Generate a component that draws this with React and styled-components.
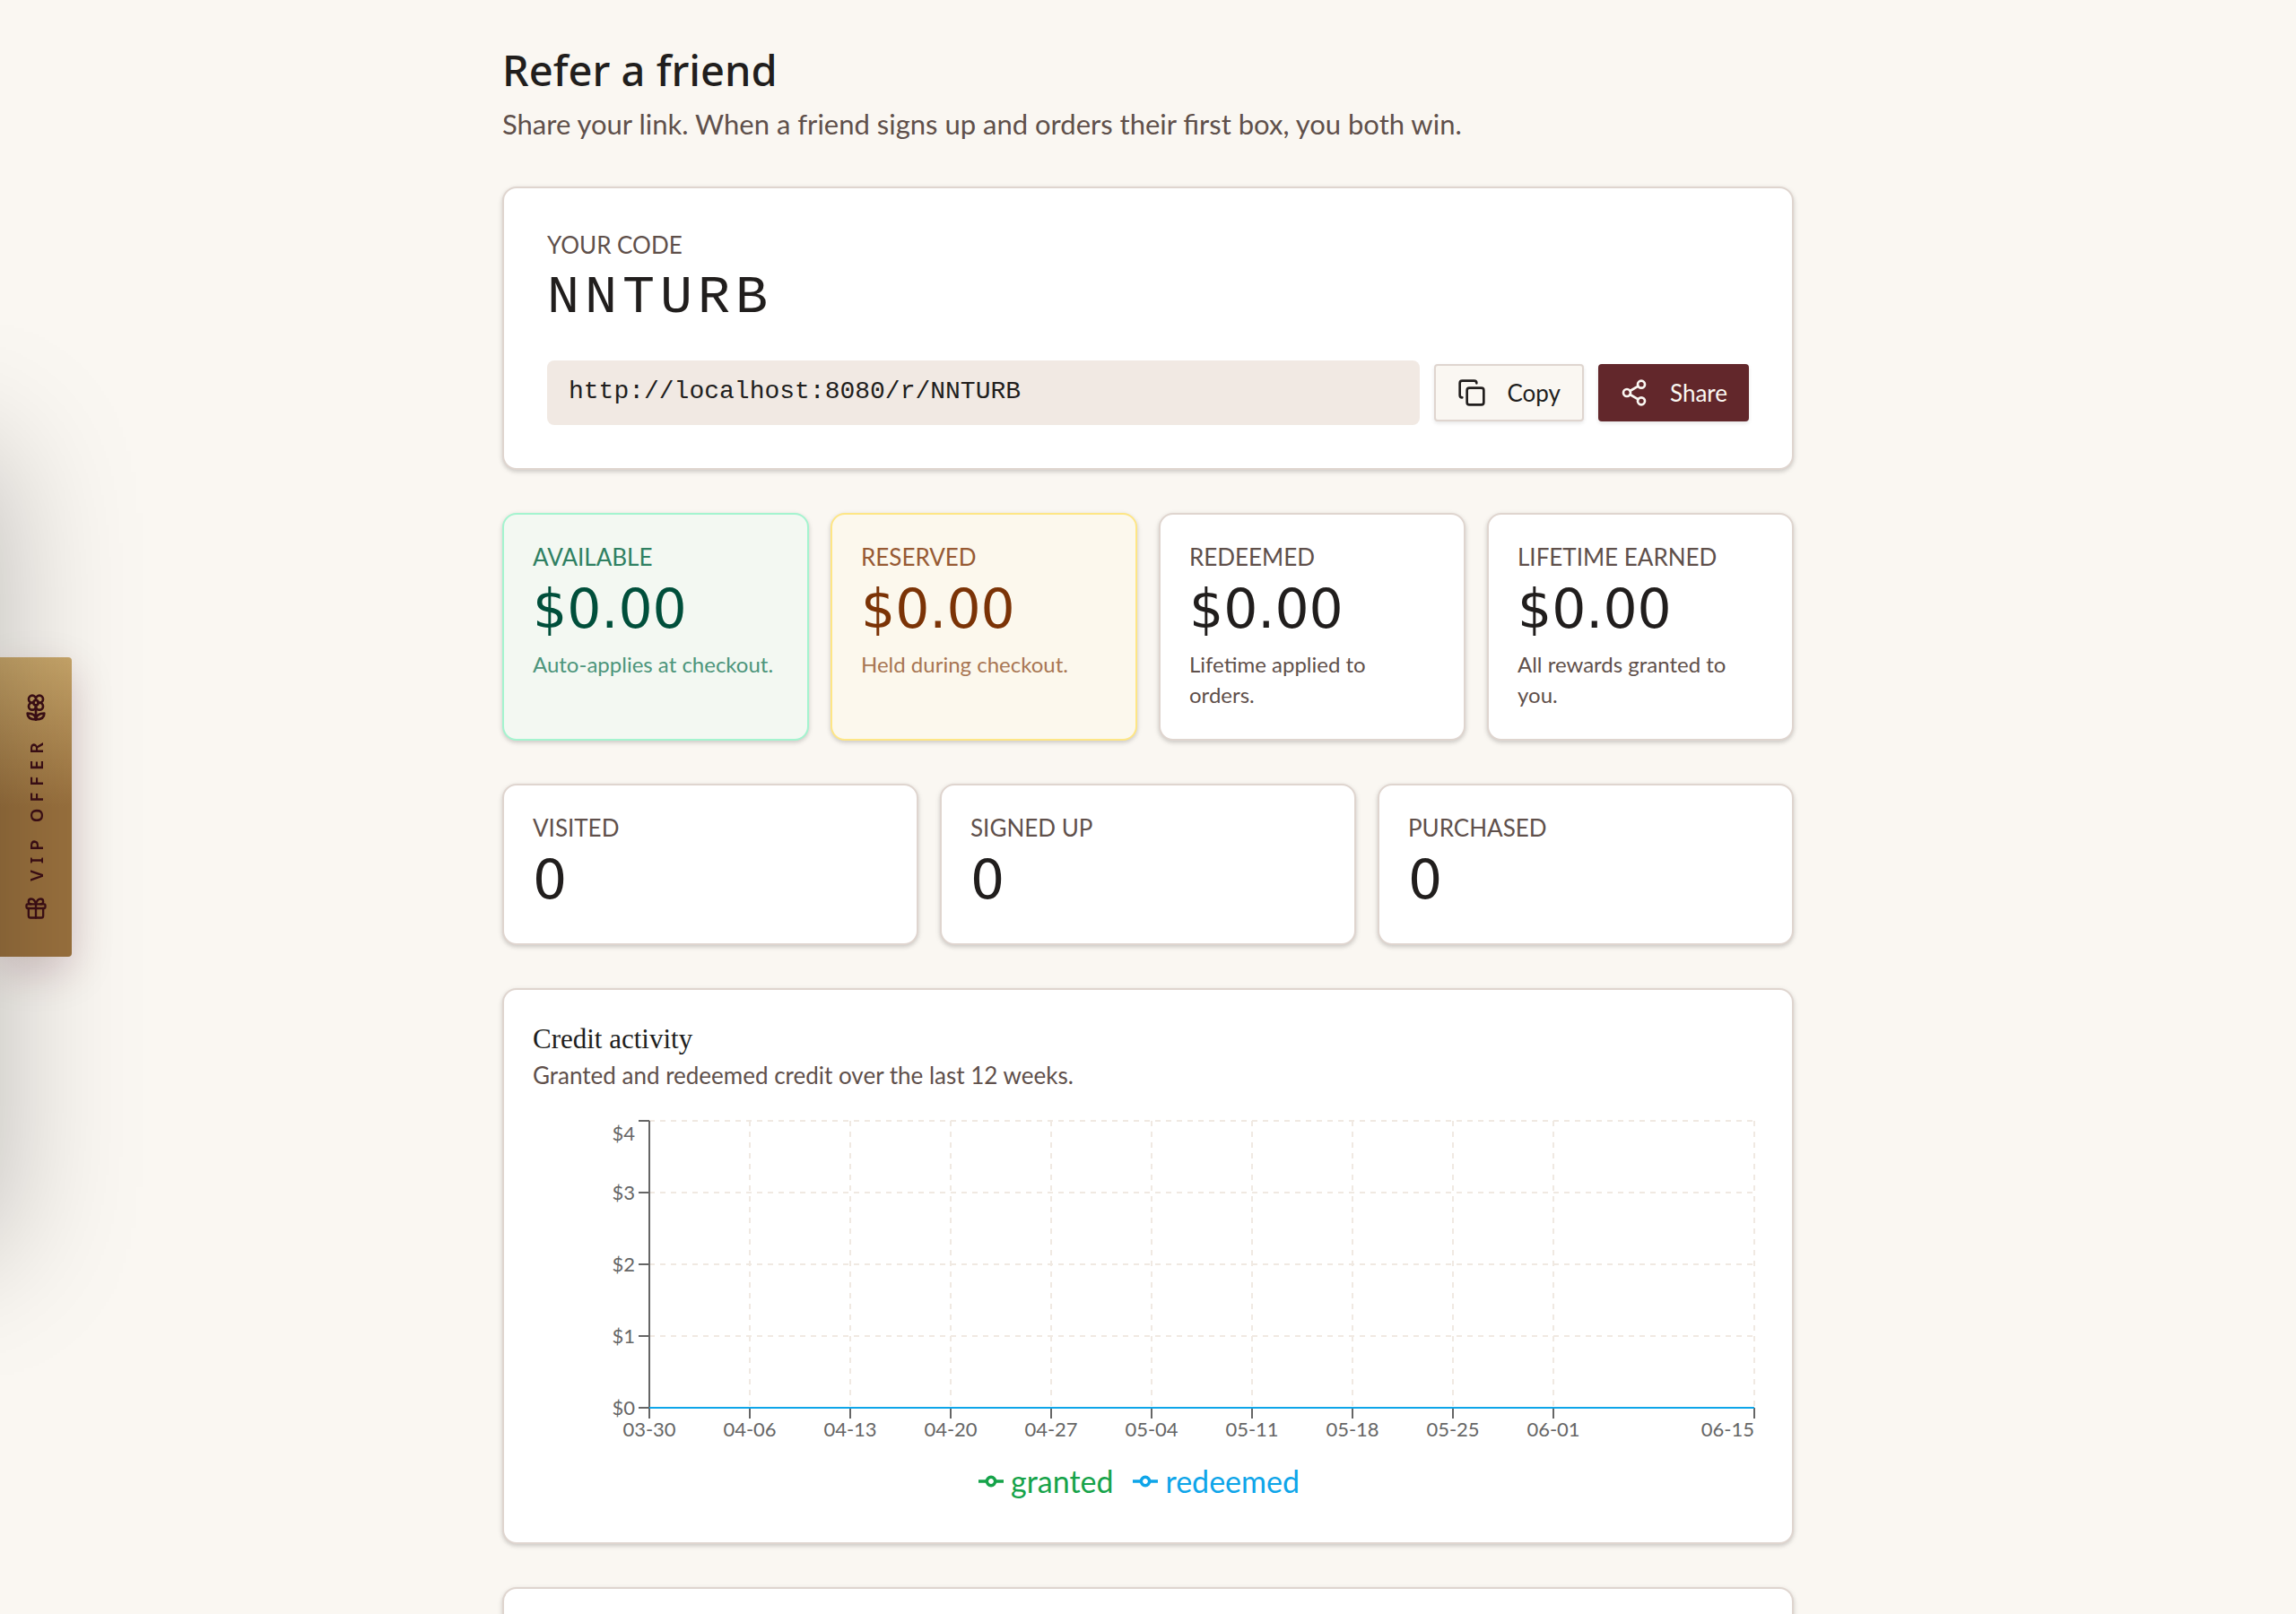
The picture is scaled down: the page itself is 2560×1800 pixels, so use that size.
import React, { useEffect, useRef, useState } from "react";
import styled, { createGlobalStyle } from "styled-components";
import { Copy, Share2, Gift, Flower2 } from "lucide-react";

const stats = [
  { label: "AVAILABLE", value: "$0.00", note: "Auto-applies at checkout.", tone: "green" },
  { label: "RESERVED", value: "$0.00", note: "Held during checkout.", tone: "amber" },
  { label: "REDEEMED", value: "$0.00", note: "Lifetime applied to orders." },
  { label: "LIFETIME EARNED", value: "$0.00", note: "All rewards granted to you." },
];

const funnel = [
  { label: "VISITED", value: "0" },
  { label: "SIGNED UP", value: "0" },
  { label: "PURCHASED", value: "0" },
];

const weeks = [
  "03-30",
  "04-06",
  "04-13",
  "04-20",
  "04-27",
  "05-04",
  "05-11",
  "05-18",
  "05-25",
  "06-01",
  "06-08",
  "06-15",
];
const dollars = [0, 1, 2, 3, 4];

const tones = {
  plain: {
    bg: "#ffffff",
    border: "#dfd5cf",
    label: "#5f504b",
    value: "#211e1d",
    note: "#5f504b",
  },
  green: {
    bg: "#f3f8f2",
    border: "#a4f4cf",
    label: "#2f8062",
    value: "#004f3b",
    note: "#4c957b",
  },
  amber: {
    bg: "#fcf8ed",
    border: "#fee685",
    label: "#975a33",
    value: "#7b3306",
    note: "#a87653",
  },
};

const CreditChart = () => {
  const box = useRef(null);
  const [width, setWidth] = useState(1372);

  useEffect(() => {
    const observer = new ResizeObserver(([entry]) =>
      setWidth(entry.contentRect.width)
    );
    observer.observe(box.current);
    return () => observer.disconnect();
  }, []);

  const left = 130;
  const right = width - 10;
  const top = 10;
  const bottom = 330;
  const x = (i) => left + ((right - left) * i) / (weeks.length - 1);
  const y = (v) => bottom - ((bottom - top) * v) / 4;
  const shown = weeks.map((w, i) => ({ w, i })).filter(({ i }) => i !== 10);

  return (
    <ChartBox ref={box}>
      <svg width={width} height="370" role="img" aria-label="Credit activity">
        <g stroke="#f0e9e2" strokeWidth="2" strokeDasharray="6 6">
          {dollars.map((v) => (
            <line key={v} x1={left} x2={right} y1={y(v)} y2={y(v)} />
          ))}
          {shown.map(({ w, i }) => (
            <line key={w} x1={x(i)} x2={x(i)} y1={top} y2={bottom} />
          ))}
        </g>
        <g stroke="#666666" strokeWidth="2">
          <line x1={left} x2={left} y1={top} y2={bottom} />
          {dollars.map((v) => (
            <line key={v} x1={left - 12} x2={left} y1={y(v)} y2={y(v)} />
          ))}
          {shown.map(({ w, i }) => (
            <line key={w} x1={x(i)} x2={x(i)} y1={bottom} y2={bottom + 12} />
          ))}
        </g>
        <line x1={left} x2={right} y1={bottom} y2={bottom} stroke="#16a34a" strokeWidth="2" />
        <line x1={left} x2={right} y1={bottom} y2={bottom} stroke="#0ea5e9" strokeWidth="2" />
        {dollars.map((v) => (
          <Tick key={v} x={left - 16} y={v === 4 ? y(v) + 22 : y(v) + 8} textAnchor="end">
            {`$${v}`}
          </Tick>
        ))}
        {shown.map(({ w, i }) => (
          <Tick
            key={w}
            x={x(i)}
            y={bottom + 32}
            textAnchor={i === weeks.length - 1 ? "end" : "middle"}
          >
            {w}
          </Tick>
        ))}
      </svg>
    </ChartBox>
  );
};

const LegendItem = ({ color, children }) => (
  <Series $color={color}>
    <svg width="28" height="28" viewBox="0 0 32 32" fill="none" stroke={color} strokeWidth="4">
      <path d="M0 16h10.67A5.33 5.33 0 1 1 21.33 16H32M21.33 16A5.33 5.33 0 1 1 10.67 16" />
    </svg>
    {children}
  </Series>
);

const StatCard = ({ label, value, note, tone = "plain" }) => (
  <Card $tone={tone}>
    <Label $tone={tone}>{label}</Label>
    <Value $tone={tone}>{value}</Value>
    {note && <Note $tone={tone}>{note}</Note>}
  </Card>
);

const App = () => {
  return (
    <>
      <GlobalStyle />
      <Page>
        <header>
          <Title>Refer a friend</Title>
          <Intro>
            Share your link. When a friend signs up and orders their first box,
            you both win.
          </Intro>
        </header>
        <Card $wide>
          <Label as="label" htmlFor="link">
            YOUR CODE
          </Label>
          <Code>NNTURB</Code>
          <LinkRow>
            <LinkInput id="link" readOnly value="http://localhost:8080/r/NNTURB" />
            <Button type="button">
              <Copy size={32} />
              Copy
            </Button>
            <Button type="button" $primary>
              <Share2 size={32} />
              Share
            </Button>
          </LinkRow>
        </Card>
        <Grid $columns={4}>
          {stats.map((s) => (
            <StatCard key={s.label} {...s} />
          ))}
        </Grid>
        <Grid $columns={3}>
          {funnel.map((s) => (
            <StatCard key={s.label} {...s} />
          ))}
        </Grid>
        <Card>
          <CardTitle>Credit activity</CardTitle>
          <CardText>Granted and redeemed credit over the last 12 weeks.</CardText>
          <CreditChart />
          <Legend>
            <LegendItem color="#16a34a">granted</LegendItem>
            <LegendItem color="#0ea5e9">redeemed</LegendItem>
          </Legend>
        </Card>
        <EmptyCard />
      </Page>
      <OfferTab type="button">
        <Flower2 size={32} />
        <span>VIP OFFER</span>
        <Gift size={28} />
      </OfferTab>
      <Drawer aria-hidden="true" />
    </>
  );
};

const GlobalStyle = createGlobalStyle`
  * {
    box-sizing: border-box;
  }
  html {
    scrollbar-width: none;
  }
  body {
    margin: 0;
    background-color: #faf7f2;
    color: #211e1d;
    font-family: Lato, sans-serif;
  }
  h1, h2, p {
    margin: 0;
  }
`;

const Page = styled.main`
  max-width: 1536px;
  margin: 0 auto;
  padding: 48px;
  display: flex;
  flex-direction: column;
  gap: 48px;
`;

const Title = styled.h1`
  font-family: "Noto Sans", sans-serif;
  font-size: 47px;
  font-weight: 500;
  line-height: 60px;
`;

const Intro = styled.p`
  margin-top: 8px;
  font-size: 31px;
  line-height: 44px;
  color: #5f504b;
`;

const Card = styled.section`
  padding: ${({ $wide }) => ($wide ? "48px" : "32px")};
  border: 2px solid ${({ $tone = "plain" }) => tones[$tone].border};
  border-radius: 16px;
  background-color: ${({ $tone = "plain" }) => tones[$tone].bg};
  box-shadow: 0 2px 6px rgba(0, 0, 0, 0.1), 0 2px 4px rgba(0, 0, 0, 0.1);
`;

const EmptyCard = styled(Card)`
  height: 320px;
`;

const Label = styled.p`
  display: block;
  margin-bottom: 4px;
  font-size: 26px;
  line-height: 30px;
  color: ${({ $tone = "plain" }) => tones[$tone].label};
`;

const Value = styled.p`
  font-family: "DejaVu Sans", sans-serif;
  font-size: 60px;
  line-height: 78px;
  color: ${({ $tone }) => tones[$tone].value};
`;

const Note = styled.p`
  margin-top: 6px;
  font-size: 24px;
  line-height: 34px;
  color: ${({ $tone }) => tones[$tone].note};
`;

const Code = styled.p`
  font-family: "Liberation Mono", monospace;
  font-size: 60px;
  line-height: 80px;
  letter-spacing: 6px;
`;

const LinkRow = styled.div`
  display: flex;
  align-items: center;
  gap: 16px;
  margin-top: 30px;
`;

const LinkInput = styled.input`
  flex: 1;
  min-width: 0;
  height: 72px;
  padding: 0 24px 4px;
  border: none;
  border-radius: 8px;
  background-color: #f1e9e3;
  color: #211e1d;
  font-family: "Liberation Mono", monospace;
  font-size: 28px;
`;

const Button = styled.button`
  display: flex;
  align-items: center;
  gap: 24px;
  height: 64px;
  padding: 0 24px;
  border: ${({ $primary }) => ($primary ? "none" : "2px solid #dfd5cf")};
  border-radius: 4px;
  background-color: ${({ $primary }) => ($primary ? "#62272b" : "#faf7f2")};
  color: ${({ $primary }) => ($primary ? "#faf7f2" : "#211e1d")};
  box-shadow: 0 2px 4px rgba(0, 0, 0, 0.1);
  font-family: Lato, sans-serif;
  font-size: 26px;
  cursor: pointer;
`;

const Grid = styled.div`
  display: grid;
  grid-template-columns: repeat(${({ $columns }) => $columns}, 1fr);
  gap: 24px;
`;

const CardTitle = styled.h2`
  font-family: "Liberation Serif", serif;
  font-size: 31px;
  font-weight: 400;
  line-height: 46px;
`;

const CardText = styled.p`
  font-size: 26px;
  line-height: 34px;
  color: #5f504b;
`;

const ChartBox = styled.div`
  margin-top: 24px;
  svg {
    display: block;
  }
`;

const Tick = styled.text`
  fill: #666666;
  font-size: 22px;
`;

const Legend = styled.div`
  display: flex;
  justify-content: center;
  padding: 18px 20px 12px 0;
  gap: 22px;
`;

const Series = styled.span`
  display: flex;
  align-items: center;
  gap: 8px;
  font-size: 34px;
  line-height: 48px;
  color: ${({ $color }) => $color};
`;

const OfferTab = styled.button`
  position: fixed;
  left: 0;
  top: 50%;
  transform: translateY(-50%);
  display: flex;
  flex-direction: column;
  align-items: center;
  justify-content: space-between;
  width: 80px;
  height: 334px;
  padding: 40px 0;
  border: none;
  border-radius: 0 4px 4px 0;
  background: linear-gradient(180deg, #c8a66a 0%, #9a713e 50%, #9a713e 100%);
  box-shadow: 0 16px 48px rgba(80, 10, 30, 0.2);
  color: #3d0f16;
  cursor: pointer;
  span {
    writing-mode: vertical-rl;
    rotate: 180deg;
    font-family: "Noto Sans", sans-serif;
    font-size: 20px;
    font-weight: 600;
    letter-spacing: 7px;
  }
`;

/* closed drawer: only its shadow reaches into the window */
const Drawer = styled.aside`
  position: fixed;
  right: 100%;
  top: 50%;
  width: 880px;
  height: 890px;
  transform: translateY(-50%);
  box-shadow: 0 48px 140px rgba(0, 0, 0, 0.25);
  pointer-events: none;
`;

export default App;
